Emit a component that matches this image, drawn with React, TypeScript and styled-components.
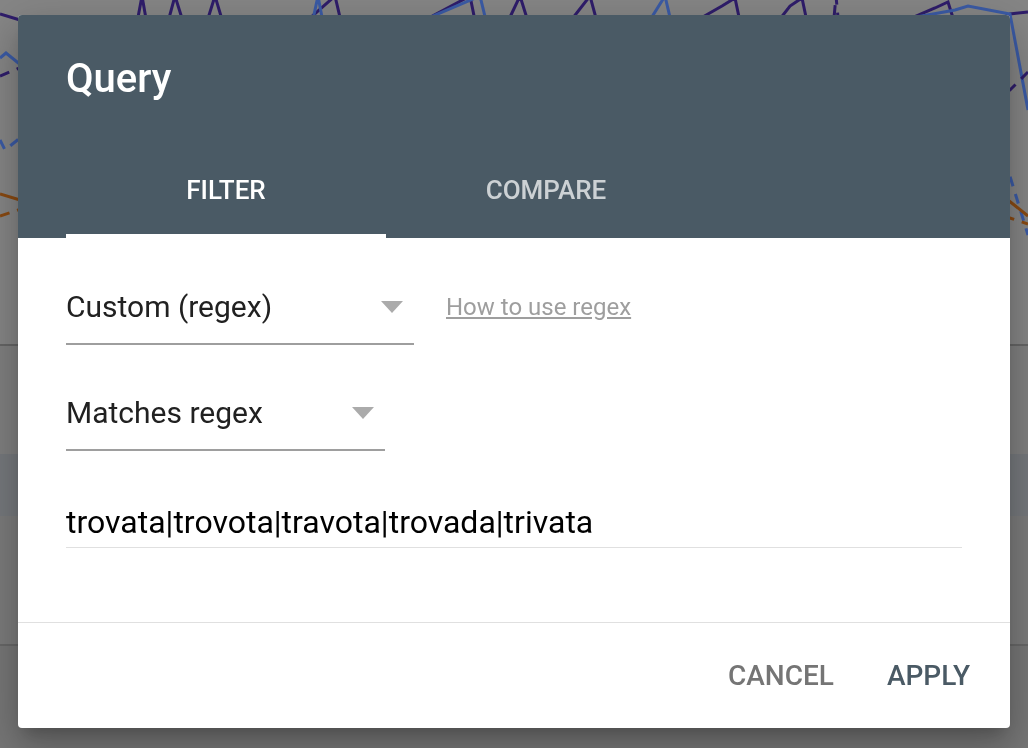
import React from 'react';
import styled, { createGlobalStyle } from 'styled-components';

const GlobalStyle = createGlobalStyle`
  html, body {
    margin: 0;
    padding: 0;
  }
  body {
    font-family: Roboto, "Liberation Sans", Arial, sans-serif;
  }
`;

// dimmed page behind the dialog
const Backdrop = styled.div`
  position: fixed;
  inset: 0;
  display: flex;
  flex-direction: column;
  overflow: hidden;
  background: #777777;
`;

const ChartArea = styled.div`
  height: 344px;
  background: #868686;
  border-bottom: 2px solid #666666;
  svg {
    display: block;
  }
`;

const PageBlock = styled.div<{ h: number; bg: string; line?: boolean }>`
  height: ${({ h }) => h}px;
  background: ${({ bg }) => bg};
  border-bottom: ${({ line }) => (line ? '2px solid #686868' : 'none')};
`;

const Dialog = styled.div`
  position: absolute;
  left: 18px;
  top: 15px;
  width: 992px;
  height: 713px;
  display: flex;
  flex-direction: column;
  background: #ffffff;
  border-radius: 4px;
  overflow: hidden;
  box-shadow: 0 24px 38px 3px rgba(0, 0, 0, 0.14), 0 9px 46px 8px rgba(0, 0, 0, 0.12),
    0 11px 15px -7px rgba(0, 0, 0, 0.2);
`;

const Header = styled.div`
  height: 223px;
  box-sizing: border-box;
  padding: 40px 48px 0;
  background: #4a5a65;
  display: flex;
  flex-direction: column;
  justify-content: space-between;
`;

const Title = styled.h2`
  margin: 0;
  font-size: 40px;
  line-height: 48px;
  font-weight: 500;
  color: #ffffff;
`;

const TabBar = styled.div`
  display: flex;
`;

const Tab = styled.div<{ active?: boolean }>`
  width: 320px;
  height: 92px;
  box-sizing: border-box;
  display: flex;
  align-items: center;
  justify-content: center;
  font-size: 26px;
  font-weight: 500;
  text-transform: uppercase;
  color: ${({ active }) => (active ? '#ffffff' : 'rgba(255, 255, 255, 0.72)')};
  border-bottom: 4px solid ${({ active }) => (active ? '#ffffff' : 'transparent')};
  cursor: pointer;
`;

const Body = styled.div`
  flex: 1;
  padding: 51px 48px 0;
  display: flex;
  flex-direction: column;
`;

const FieldRow = styled.div<{ gap?: number }>`
  display: flex;
  align-items: flex-start;
  margin-top: ${({ gap }) => gap || 0}px;
`;

const SelectBox = styled.div<{ width: number }>`
  width: ${({ width }) => width}px;
  box-sizing: border-box;
  display: flex;
  align-items: center;
  justify-content: space-between;
  padding-bottom: 18px;
  border-bottom: 2px solid #9e9e9e;
  font-size: 30px;
  line-height: 36px;
  color: #212121;
  cursor: pointer;
`;

const Caret = styled.span`
  width: 0;
  height: 0;
  margin-right: 11px;
  border-left: 11px solid transparent;
  border-right: 11px solid transparent;
  border-top: 12px solid #ababab;
`;

const HelpLink = styled.a`
  margin-left: 32px;
  font-size: 24px;
  line-height: 36px;
  color: #9e9e9e;
  text-decoration: underline;
  cursor: pointer;
`;

const TextInput = styled.input`
  margin-top: 53px;
  width: 896px;
  height: 36px;
  padding: 0 0 7px;
  border: none;
  border-bottom: 1px solid #e0e0e0;
  outline: none;
  font-family: inherit;
  font-size: 32px;
  color: #000000;
  background: transparent;
`;

const Footer = styled.div`
  height: 105px;
  border-top: 1px solid #e0e0e0;
  display: flex;
  align-items: center;
  justify-content: flex-end;
  gap: 21px;
  padding-right: 24px;
`;

const TextButton = styled.button<{ primary?: boolean }>`
  padding: 0 16px;
  border: none;
  background: none;
  font-family: inherit;
  font-size: 28px;
  font-weight: 500;
  text-transform: uppercase;
  color: ${({ primary }) => (primary ? '#4a5a65' : '#757575')};
  cursor: pointer;
`;

const purple = '#2f1d6b';
const blue = '#3b5ba6';
const orange = '#8a4a12';

const Chart = () => (
  <svg width="1028" height="344" viewBox="0 0 1028 344">
    <polyline
      fill="none"
      stroke={purple}
      strokeWidth="3"
      points="0,14 20,20 130,60 142,-4 155,70 175,-4 195,60 215,-4 240,80 335,-4 350,60 470,-4 485,70 520,-4 540,60 590,-4 610,70 722,6 735,-2 748,60 790,6 802,-2 815,60 935,8 948,2 960,40 1010,14 1028,12"
    />
    <polyline
      fill="none"
      stroke={blue}
      strokeWidth="3"
      points="0,58 6,53 22,66 300,80 318,-4 330,60 480,-4 498,70 650,20 665,-4 680,60 955,10 968,6 1010,14 1028,110"
    />
    <polyline
      fill="none"
      stroke={purple}
      strokeWidth="3"
      strokeDasharray="10 8"
      points="0,76 22,67 300,100 832,40 836,-4 842,60 1010,90 1028,72"
    />
    <polyline
      fill="none"
      stroke={blue}
      strokeWidth="3"
      strokeDasharray="10 8"
      points="0,140 5,150 20,138 600,160 1008,170 1028,235"
    />
    <polyline
      fill="none"
      stroke={orange}
      strokeWidth="3"
      points="0,194 20,200 500,230 1008,200 1028,216"
    />
    <polyline
      fill="none"
      stroke={orange}
      strokeWidth="3"
      strokeDasharray="10 8"
      points="0,216 18,210 500,250 1010,218 1028,224"
    />
  </svg>
);

export default function App() {
  return (
    <>
      <GlobalStyle />
      <Backdrop>
        <ChartArea>
          <Chart />
        </ChartArea>
        <PageBlock h={108} bg="#808080" />
        <PageBlock h={62} bg="#76797d" />
        <PageBlock h={128} bg="#7c7c7c" line />
      </Backdrop>
      <Dialog>
        <Header>
          <Title>Query</Title>
          <TabBar>
            <Tab active>Filter</Tab>
            <Tab>Compare</Tab>
          </TabBar>
        </Header>
        <Body>
          <FieldRow>
            <SelectBox width={348}>
              <span>Custom (regex)</span>
              <Caret />
            </SelectBox>
            <HelpLink>How to use regex</HelpLink>
          </FieldRow>
          <FieldRow gap={50}>
            <SelectBox width={319}>
              <span>Matches regex</span>
              <Caret />
            </SelectBox>
          </FieldRow>
          <TextInput readOnly value="trovata|trovota|travota|trovada|trivata" />
        </Body>
        <Footer>
          <TextButton>Cancel</TextButton>
          <TextButton primary>Apply</TextButton>
        </Footer>
      </Dialog>
    </>
  );
}
